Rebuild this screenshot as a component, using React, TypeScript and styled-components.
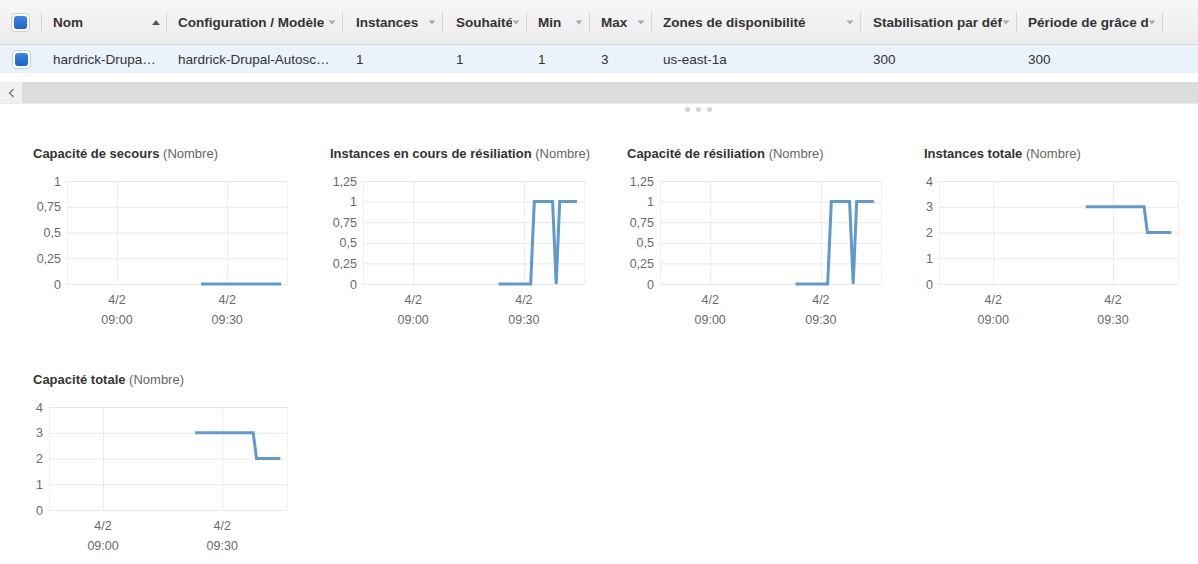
import React from "react";
import styled, { createGlobalStyle } from "styled-components";

const Global = createGlobalStyle`
  html, body { margin: 0; padding: 0; background: #fff; }
  * { box-sizing: border-box; }
`;

const FONT = `"Liberation Sans", Arial, Helvetica, sans-serif`;

const Page = styled.div`
  width: 1198px;
  height: 564px;
  overflow: hidden;
  background: #fff;
  font-family: ${FONT};
  color: #333;
`;

const COLS = "42px 125px 176px 100px 84px 63px 62px 209px 156px 146px 1fr";

const HeaderRow = styled.div`
  display: grid;
  grid-template-columns: ${COLS};
  height: 45px;
  background: linear-gradient(#f7f7f7, #ebebeb);
  border-bottom: 1px solid #d9d9d9;
`;

const HeadCell = styled.div<{ $sep?: boolean; $pad?: number }>`
  position: relative;
  display: flex;
  align-items: center;
  padding: 0 7px 0 ${(p) => p.$pad ?? 11}px;
  font-size: 13.5px;
  font-weight: bold;
  color: #333;
  min-width: 0;
  &::after {
    content: "";
    display: ${(p) => (p.$sep === false ? "none" : "block")};
    position: absolute;
    right: 0;
    top: 12px;
    bottom: 12px;
    width: 1px;
    background: #d6d6d6;
  }
`;

const HeadLabel = styled.span`
  flex: 1;
  min-width: 0;
  overflow: hidden;
  white-space: nowrap;
`;

const CheckCell = styled.div`
  position: relative;
  display: flex;
  align-items: center;
  justify-content: center;
  padding-right: 1px;
  &::after {
    content: "";
    position: absolute;
    right: 0;
    top: 12px;
    bottom: 12px;
    width: 1px;
    background: #d6d6d6;
  }
`;

const BodyCheckCell = styled.div`
  display: flex;
  align-items: center;
  justify-content: center;
`;

const CheckBox = styled.span`
  width: 19px;
  height: 19px;
  border-radius: 4px;
  border: 1px solid #cfcfcf;
  background: #fbfbfb;
  display: flex;
  align-items: center;
  justify-content: center;
  &::before {
    content: "";
    width: 13px;
    height: 13px;
    border-radius: 3px;
    background: linear-gradient(#3d86e2, #1f63c4);
  }
`;

const DataRow = styled.div`
  display: grid;
  grid-template-columns: ${COLS};
  height: 28px;
  background: #eaf2fb;
`;

const DataCell = styled.div<{ $pad?: number }>`
  display: flex;
  align-items: center;
  padding: 0 11px 0 ${(p) => p.$pad ?? 11}px;
  font-size: 13.5px;
  color: #333;
  min-width: 0;
  overflow: hidden;
  & > span {
    overflow: hidden;
    white-space: nowrap;
    text-overflow: ellipsis;
  }
`;

const ScrollBar = styled.div`
  margin-top: 9px;
  height: 21px;
  display: flex;
  background: #dcdcdc;
`;

const ScrollButton = styled.div`
  width: 22px;
  height: 100%;
  background: #f1f1f1;
  display: flex;
  align-items: center;
  justify-content: center;
`;

const Splitter = styled.div`
  height: 12px;
  border-top: 1px solid #ececec;
  display: flex;
  align-items: center;
  gap: 6px;
  padding-left: 685px;
`;

const Dot = styled.span`
  width: 5px;
  height: 5px;
  border-radius: 50%;
  background: #d4d4d4;
`;

const ChartsGrid = styled.div`
  display: grid;
  grid-template-columns: repeat(4, 297px);
  row-gap: 41px;
  padding: 31px 0 0 33px;
`;

const ChartCell = styled.div`
  display: flex;
  flex-direction: column;
`;

const ChartTitle = styled.div`
  height: 16px;
  line-height: 16px;
  font-size: 13px;
  white-space: nowrap;
  color: #333;
  b { font-weight: bold; }
  span { color: #666; }
`;

const ChartSvg = styled.svg`
  display: block;
  margin-top: 9px;
  overflow: visible;
`;

const AxisText = styled.text`
  font-family: ${FONT};
  font-size: 12.5px;
  fill: #6a6a6a;
`;

const SortUp = () => (
  <svg width="8" height="5" viewBox="0 0 8 5">
    <path d="M0 5 L4 0 L8 5 Z" fill="#555" />
  </svg>
);

const Caret = () => (
  <svg width="8" height="5" viewBox="0 0 8 5">
    <path d="M0.5 0.5 L7.5 0.5 L4 4.5 Z" fill="#aaa" />
  </svg>
);

type Pt = [number, number];

interface ChartProps {
  title: string;
  ticks: { label: string; value: number }[];
  max: number;
  axis: number;
  data: Pt[];
}

const W = 262;
const H = 160;
const TOP = 10;
const BOTTOM = 113;
const RIGHT = 254;
const VGRID = [0.227, 0.728];

function Chart({ title, ticks, max, axis, data }: ChartProps) {
  const left = axis;
  const pw = RIGHT - left;
  const yOf = (v: number) => BOTTOM - (v / max) * (BOTTOM - TOP);
  const xOf = (f: number) => left + f * pw;
  const pts = data.map(([f, v]) => `${xOf(f).toFixed(1)},${yOf(v).toFixed(1)}`).join(" ");
  return (
    <ChartCell>
      <ChartTitle>
        <b>{title}</b> <span>(Nombre)</span>
      </ChartTitle>
      <ChartSvg width={W} height={H} viewBox={`0 0 ${W} ${H}`}>
        <rect x={left + 0.5} y={TOP + 0.5} width={pw} height={BOTTOM - TOP} fill="none" stroke="#f0f0f0" />
        {ticks.map((t) => (
          <g key={t.label}>
            <line x1={left} x2={RIGHT} y1={yOf(t.value) + 0.5} y2={yOf(t.value) + 0.5} stroke="#e9e9e9" />
            <AxisText x={left - 6} y={yOf(t.value) + 4.5} textAnchor="end">
              {t.label}
            </AxisText>
          </g>
        ))}
        {VGRID.map((f, i) => (
          <g key={f}>
            <line x1={xOf(f) + 0.5} x2={xOf(f) + 0.5} y1={TOP} y2={BOTTOM} stroke="#ececec" />
            <AxisText x={xOf(f)} y={132.5} textAnchor="middle">4/2</AxisText>
            <AxisText x={xOf(f)} y={152.5} textAnchor="middle">{i === 0 ? "09:00" : "09:30"}</AxisText>
          </g>
        ))}
        <polyline points={pts} fill="none" stroke="#6198cd" strokeWidth={3} strokeLinejoin="miter" />
      </ChartSvg>
    </ChartCell>
  );
}

const ticks1 = [
  { label: "1", value: 1 },
  { label: "0,75", value: 0.75 },
  { label: "0,5", value: 0.5 },
  { label: "0,25", value: 0.25 },
  { label: "0", value: 0 },
];
const ticks125 = [{ label: "1,25", value: 1.25 }, ...ticks1];
const ticks4 = [4, 3, 2, 1, 0].map((v) => ({ label: String(v), value: v }));

const dataFlat: Pt[] = [[0.609, 0], [0.973, 0]];
const dataTerm: Pt[] = [
  [0.613, 0], [0.759, 0], [0.775, 1], [0.858, 1], [0.874, 0], [0.89, 1], [0.968, 1],
];
const dataTotal: Pt[] = [[0.614, 3], [0.858, 3], [0.872, 2], [0.972, 2]];

const charts: ChartProps[] = [
  { title: "Capacité de secours", ticks: ticks1, max: 1, axis: 34, data: dataFlat },
  { title: "Instances en cours de résiliation", ticks: ticks125, max: 1.25, axis: 33, data: dataTerm },
  { title: "Capacité de résiliation", ticks: ticks125, max: 1.25, axis: 33, data: dataTerm },
  { title: "Instances totale", ticks: ticks4, max: 4, axis: 15, data: dataTotal },
  { title: "Capacité totale", ticks: ticks4, max: 4, axis: 16, data: dataTotal },
];

const headers: { label: string; sort?: boolean; pad?: number }[] = [
  { label: "Nom", sort: true },
  { label: "Configuration / Modèle" },
  { label: "Instances", pad: 13 },
  { label: "Souhaité", pad: 13 },
  { label: "Min" },
  { label: "Max" },
  { label: "Zones de disponibilité" },
  { label: "Stabilisation par défaut", pad: 12 },
  { label: "Période de grâce de la vérification" },
];

const values = [
  "hardrick-Drupal-AutoscalingGroup",
  "hardrick-Drupal-AutoscalingLaunchConfig",
  "1",
  "1",
  "1",
  "3",
  "us-east-1a",
  "300",
  "300",
];

export default function App() {
  return (
    <Page>
      <Global />
      <HeaderRow>
        <CheckCell>
          <CheckBox />
        </CheckCell>
        {headers.map((h) => (
          <HeadCell key={h.label} $pad={h.pad}>
            <HeadLabel>{h.label}</HeadLabel>
            {h.sort ? <SortUp /> : <Caret />}
          </HeadCell>
        ))}
        <HeadCell $sep={false} />
      </HeaderRow>
      <DataRow>
        <BodyCheckCell>
          <CheckBox />
        </BodyCheckCell>
        {values.map((v, i) => (
          <DataCell key={i} $pad={headers[i].pad}>
            <span>{v}</span>
          </DataCell>
        ))}
        <DataCell />
      </DataRow>
      <ScrollBar>
        <ScrollButton>
          <svg width="7" height="10" viewBox="0 0 7 10">
            <path d="M5.5 1 L1.5 5 L5.5 9" fill="none" stroke="#777" strokeWidth="1.4" />
          </svg>
        </ScrollButton>
      </ScrollBar>
      <Splitter>
        <Dot />
        <Dot />
        <Dot />
      </Splitter>
      <ChartsGrid>
        {charts.map((c) => (
          <Chart key={c.title} {...c} />
        ))}
      </ChartsGrid>
    </Page>
  );
}
